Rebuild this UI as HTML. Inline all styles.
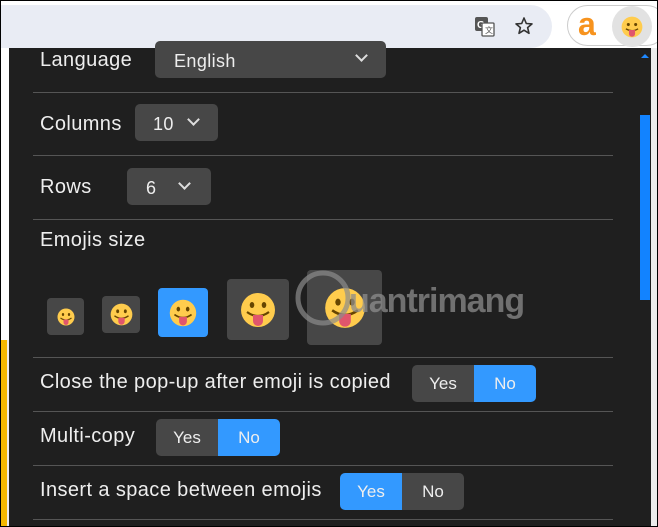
<!DOCTYPE html><html><head><style>
*{margin:0;padding:0;box-sizing:border-box}
body{width:658px;height:527px;overflow:hidden;background:#ececec;font-family:"Liberation Sans",sans-serif;position:relative}
.frame{position:absolute;left:0;top:0;width:658px;height:527px;border:1px solid #000;z-index:9;pointer-events:none}
.top{position:absolute;left:0;top:0;width:658px;height:48px;background:#fff}
.omni{position:absolute;left:0;top:5px;width:552px;height:43px;background:#e9ecf4;border-radius:0 22px 22px 0}
.ext{position:absolute;left:567px;top:5px;width:100px;height:41px;border:1px solid #ccc;border-radius:21px;background:#fff}
.panel{position:absolute;left:9px;top:48px;width:642px;height:479px;background:#1f1f1f;color:#eee;font-size:20px;letter-spacing:.4px}
.l{position:absolute;left:0;top:340px;width:7px;height:187px;background:#f5b800}
.lw{position:absolute;left:0;top:48px;width:9px;height:292px;background:#fff}
.sep{position:absolute;left:24px;width:580px;height:1px;background:#555}
.t{position:absolute;white-space:nowrap}
.sel{position:absolute;background:#474747;border-radius:5px;font-size:18px}
.chev{position:absolute;width:9px;height:9px;border-right:2px solid #ddd;border-bottom:2px solid #ddd;transform:rotate(45deg)}
.tg{position:absolute;display:flex;border-radius:5px;overflow:hidden;font-size:17px;height:37px;letter-spacing:0}
.tg div{width:62px;display:flex;align-items:center;justify-content:center;background:#474747}
.tg .on{background:#3399ff}
.box{position:absolute;background:#474747;border-radius:4px;display:flex;align-items:center;justify-content:center}
</style></head><body>
<div class="frame"></div>
<div class="top"><div class="omni"></div>
<svg style="position:absolute;left:474px;top:16px" width="22" height="22"><rect x="1" y="1" width="13" height="14" rx="2" fill="#555"/><text x="3" y="12" font-size="10" font-weight="bold" fill="#fff" font-family="Liberation Sans">G</text><rect x="8" y="7" width="12" height="13" rx="1" fill="#fff" stroke="#555" stroke-width="1.3"/><text x="11" y="17" font-size="8" fill="#555">文</text></svg>
<svg style="position:absolute;left:514px;top:16px" width="20" height="20"><path d="M10 2 L12.3 7.5 L18 7.9 L13.6 11.6 L15 17.3 L10 14.2 L5 17.3 L6.4 11.6 L2 7.9 L7.7 7.5Z" fill="none" stroke="#333" stroke-width="1.6" stroke-linejoin="round"/></svg>
<div class="ext"></div>
<div class="t" style="left:578px;top:6px;font-size:32px;font-weight:bold;color:#f7931e">a</div>
<div style="position:absolute;left:612px;top:6px;width:40px;height:41px;border-radius:50%;background:#e2e2e2"></div>
<svg style="position:absolute;left:621px;top:16px" width="22" height="22" viewBox="0 0 36 36"><circle cx="18" cy="18" r="17" fill="#ffcc4d"/><circle cx="12" cy="14" r="2.5" fill="#664500"/><circle cx="24" cy="14" r="2.5" fill="#664500"/><path d="M8 21 Q18 27 28 21" stroke="#664500" stroke-width="2" fill="none"/><path d="M13 23 h10 v6 a5 5 0 0 1 -10 0z" fill="#e0566c"/></svg>
</div>
<div class="lw"></div><div class="l"></div>
<div class="panel">
<svg style="position:absolute;left:632px;top:5px" width="8" height="6"><path d="M0 5 L4 1 L8 5Z" fill="#1e88ff"/></svg>
<div style="position:absolute;left:631px;top:67px;width:10px;height:185px;background:#1283ff"></div>
<div class="t" style="left:31px;top:1px">Language</div>
<div class="sel" style="left:146px;top:-7px;width:231px;height:37px"><span class="t" style="left:19px;top:10px">English</span><div class="chev" style="left:202px;top:10px"></div></div>
<div class="sep" style="top:44px"></div>
<div class="t" style="left:31px;top:65px">Columns</div>
<div class="sel" style="left:126px;top:56px;width:83px;height:37px"><span class="t" style="left:18px;top:10px">10</span><div class="chev" style="left:54px;top:11px"></div></div>
<div class="sep" style="top:107px"></div>
<div class="t" style="left:31px;top:128px">Rows</div>
<div class="sel" style="left:118px;top:120px;width:84px;height:37px"><span class="t" style="left:19px;top:10px">6</span><div class="chev" style="left:53px;top:11px"></div></div>
<div class="sep" style="top:171px"></div>
<div class="t" style="left:31px;top:181px">Emojis size</div>
<div class="box" style="left:38px;top:250px;width:37px;height:37px"><svg width="18" height="18" viewBox="0 0 36 36"><use href="#e"/></svg></div>
<div class="box" style="left:93px;top:248px;width:38px;height:37px"><svg width="23" height="23" viewBox="0 0 36 36"><use href="#e"/></svg></div>
<div class="box" style="left:149px;top:240px;width:50px;height:49px;background:#3399ff"><svg width="28" height="28" viewBox="0 0 36 36"><use href="#e"/></svg></div>
<div class="box" style="left:218px;top:231px;width:62px;height:61px"><svg width="36" height="36" viewBox="0 0 36 36"><use href="#e"/></svg></div>
<div class="box" style="left:298px;top:222px;width:75px;height:75px"><svg width="42" height="42" viewBox="0 0 36 36"><use href="#e"/></svg></div>
<svg width="0" height="0" style="position:absolute"><defs><g id="e"><circle cx="18" cy="18" r="17" fill="#ffcc4d"/><ellipse cx="12" cy="13" rx="2.3" ry="3" fill="#664500"/><ellipse cx="24" cy="13" rx="2.3" ry="3" fill="#664500"/><path d="M7 20 Q18 28 29 20" stroke="#664500" stroke-width="2.2" fill="none"/><path d="M13 23 h10 v6 a5 5 0 0 1 -10 0z" fill="#e0566c"/></g></defs></svg>
<div class="t" style="left:340px;top:234px;font-size:34px;font-weight:bold;color:rgba(140,140,140,.75);letter-spacing:-1px">uantrimang</div>
<svg style="position:absolute;left:284px;top:220px" width="60" height="60"><circle cx="30" cy="30" r="25" fill="none" stroke="rgba(140,140,140,.7)" stroke-width="5"/></svg>
<div class="sep" style="top:309px"></div>
<div class="t" style="left:31px;top:323px">Close the pop-up after emoji is copied</div>
<div class="tg" style="left:403px;top:317px"><div>Yes</div><div class="on">No</div></div>
<div class="sep" style="top:363px"></div>
<div class="t" style="left:31px;top:377px">Multi-copy</div>
<div class="tg" style="left:147px;top:371px"><div>Yes</div><div class="on">No</div></div>
<div class="sep" style="top:417px"></div>
<div class="t" style="left:31px;top:431px">Insert a space between emojis</div>
<div class="tg" style="left:331px;top:425px"><div class="on">Yes</div><div>No</div></div>
<div class="sep" style="top:471px"></div>
</div>
</body></html>
